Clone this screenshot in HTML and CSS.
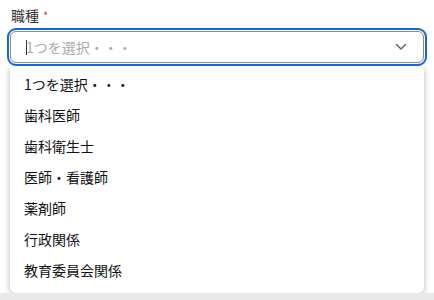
FILE: index.html
```html
<!DOCTYPE html>
<html lang="ja">

<head>
    <meta charset="UTF-8">
    <meta name="viewport" content="width=device-width, initial-scale=1.0">
    <title>職種</title>
    <link rel="stylesheet" href="styles.css">
</head>

<body>

    <!-- Field Section -->
    <div class="field">
        <label class="field-label" for="job">職種<span class="required">*</span></label>
        <div class="select" id="job">
            <span class="caret"></span>
            <span class="placeholder">1つを選択・・・</span>
            <svg class="chevron" width="12" height="8" viewBox="0 0 12 8">
                <path d="M1.5 1.5 L6 6 L10.5 1.5" fill="none" stroke="#666" stroke-width="1.5" stroke-linecap="round" stroke-linejoin="round" />
            </svg>
        </div>

        <!-- Options List -->
        <ul class="options">
            <li>1つを選択・・・</li>
            <li>歯科医師</li>
            <li>歯科衛生士</li>
            <li>医師・看護師</li>
            <li>薬剤師</li>
            <li>行政関係</li>
            <li>教育委員会関係</li>
        </ul>
    </div>

    <div class="band"></div>

</body>

</html>
```

FILE: styles.css
```css
body {
    font-family: 'Noto Sans CJK JP', 'Noto Sans', sans-serif;
    background-color: #fff;
    margin: 0;
    height: 300px;
    display: flex;
    flex-direction: column;
    overflow: hidden;
}

.field {
    padding: 5px 10px 0 10px;
    flex: 1;
}

.field-label {
    display: block;
    font-size: 14px;
    line-height: 20px;
    color: #333;
    margin-left: 1px;
}

.required {
    color: #e53935;
    font-size: 11px;
    vertical-align: top;
    margin-left: 4px;
}

.select {
    display: flex;
    align-items: center;
    height: 30px;
    margin-top: 6px;
    border: 1px solid #8a8a8a;
    border-radius: 6px;
    outline: 2px solid #1565e0;
    outline-offset: 1px;
    padding: 0 16px 0 15px;
}

.caret {
    width: 1px;
    height: 15px;
    background-color: #333;
}

.placeholder {
    flex: 1;
    font-size: 14px;
    color: #aaa;
    margin-left: -1px;
}

.chevron {
    display: block;
}

.options {
    list-style: none;
    margin: 3px 0 0 0;
    padding: 3px 0 7px 0;
    background-color: #fff;
    border-radius: 0 0 6px 6px;
    box-shadow: 0 2px 6px rgba(0, 0, 0, 0.28);
}

.options li {
    font-size: 14px;
    line-height: 31px;
    color: #111;
    padding-left: 14px;
}

.band {
    height: 8px;
    background-color: #e9e9e9;
}
```
